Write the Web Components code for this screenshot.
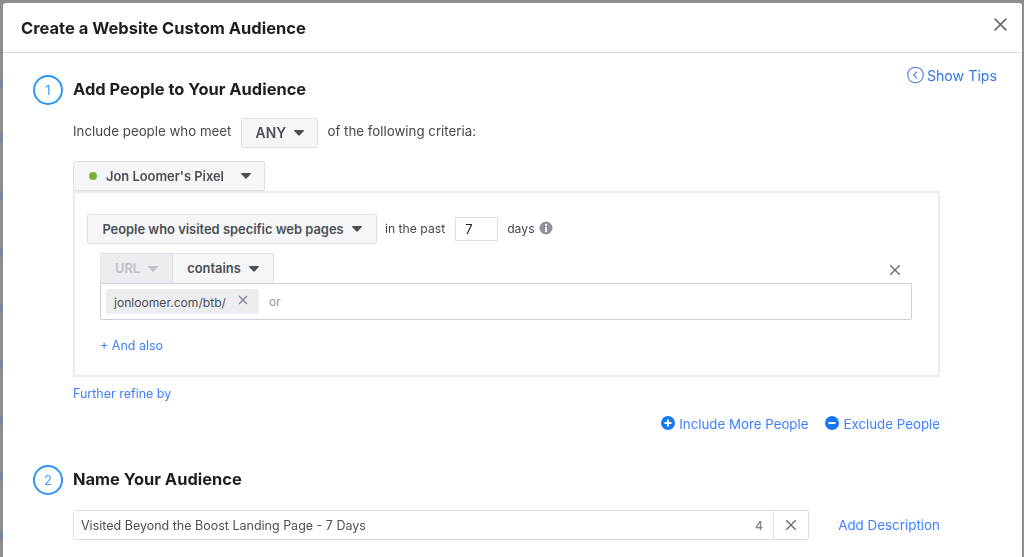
<!DOCTYPE html>
<html>
<head>
<meta charset="utf-8">
<title>Create a Website Custom Audience</title>
<style>
  html, body { margin: 0; height: 100%; overflow: hidden; background: #8e8e8e; }
  body { font-family: Inter, "Liberation Sans", sans-serif; color: #1c1e21; }
  .criteria { display: flex; align-items: center; height: 30px; margin-top: 13px; font-size: 13.3px; color: #444950; }
  .criteria span { padding-bottom: 4px; }
  .more { display: flex; justify-content: flex-end; align-items: center; gap: 17px; margin-top: 12px; width: 867px; height: 20px; }
  .more fb-link { font-size: 13.3px; }
</style>
</head>
<body>

<audience-dialog heading="Create a Website Custom Audience">
  <audience-step number="1" heading="Add People to Your Audience">
    <tips-link slot="aside">Show Tips</tips-link>

    <div class="criteria">
      <span>Include people who meet</span>
      <fb-select style="margin:0 9px 0 10px;width:77px" wide>ANY</fb-select>
      <span>of the following criteria:</span>
    </div>

    <fb-select style="margin-top:13px;width:192px" dot>Jon Loomer's Pixel</fb-select>
    <rule-panel></rule-panel>
    <fb-link style="margin-top:7px;height:18px;font-size:12.5px">Further refine by</fb-link>

    <div class="more">
      <fb-link icon="plus">Include More People</fb-link>
      <fb-link icon="minus">Exclude People</fb-link>
    </div>
  </audience-step>

  <audience-step number="2" heading="Name Your Audience" style="margin-top:31px">
    <name-field value="Visited Beyond the Boost Landing Page - 7 Days" count="4"></name-field>
  </audience-step>
</audience-dialog>

<script>
const CLOSE_ICON = (size, stroke, width) => `
  <svg width="${size}" height="${size}" viewBox="0 0 14 14" style="display:block">
    <path d="M1.5 1.5 12.5 12.5M12.5 1.5 1.5 12.5" fill="none" stroke="${stroke}" stroke-width="${width}"/>
  </svg>`;

class AudienceDialog extends HTMLElement {
    constructor() {
        super();
        this.attachShadow({ mode: "open" });
    }

    connectedCallback() {
        // bits of the page behind the overlay, only the left edge shows
        const behind = [75, 130, 188, 245, 302, 358, 414, 470, 528]
            .map(y => `<i style="top:${y}px"></i>`).join("");

        this.shadowRoot.innerHTML = `
        <style>
          :host { display: flex; height: 100vh; box-sizing: border-box; padding: 3px 2px 0 0; filter: blur(.35px); }
          .behind { position: relative; flex: 0 0 3px; }
          .behind i { position: absolute; left: 0; width: 3px; height: 9px; background: #6c80a3; opacity: .6; }
          .dialog { flex: 1; min-width: 0; background: #fff; border-radius: 3px 3px 0 0; overflow: hidden; }
          header { display: flex; align-items: center; justify-content: space-between; box-sizing: border-box;
                   height: 50px; padding: 0 14px 0 18px; border-bottom: 1px solid #dddfe2; }
          header svg { margin-top: -7px; }
          h1 { margin: 0; font-size: 16.5px; font-weight: 700; color: #1c1e21; }
          .body { padding: 22px 25px 0 30px; }
        </style>
        <div class="behind">${behind}</div>
        <section class="dialog">
          <header>
            <h1>${this.getAttribute("heading")}</h1>
            ${CLOSE_ICON(15, "#606770", 1.4)}
          </header>
          <div class="body"><slot></slot></div>
        </section>`;
    }
}

class AudienceStep extends HTMLElement {
    constructor() {
        super();
        this.attachShadow({ mode: "open" });
    }

    connectedCallback() {
        this.shadowRoot.innerHTML = `
        <style>
          :host { display: block; }
          .head { display: flex; align-items: flex-start; height: 30px; }
          .num { box-sizing: border-box; width: 30px; height: 30px; margin-right: 10px; border: 2px solid #2d96fb;
                 border-radius: 50%; display: flex; align-items: center; justify-content: center;
                 font-size: 13px; color: #3f9cfb; }
          h2 { flex: 1; margin: 0; font-size: 16.45px; line-height: 29px; font-weight: 700; color: #1c1e21; }
          .content { display: flex; flex-direction: column; align-items: flex-start; padding-left: 40px; }
        </style>
        <div class="head">
          <div class="num">${this.getAttribute("number")}</div>
          <h2>${this.getAttribute("heading")}</h2>
          <slot name="aside"></slot>
        </div>
        <div class="content"><slot></slot></div>`;
    }
}

class TipsLink extends HTMLElement {
    constructor() {
        super();
        this.attachShadow({ mode: "open" });
    }

    connectedCallback() {
        this.shadowRoot.innerHTML = `
        <style>
          :host { display: flex; align-items: center; gap: 3px; height: 18px; margin-top: -9px;
                  font-size: 14.2px; color: #3578e5; }
          svg { display: block; }
        </style>
        <svg width="17" height="18" viewBox="0 0 17 18">
          <circle cx="8.5" cy="9" r="7.8" fill="none" stroke="#4a80dc" stroke-width="1.1"/>
          <path d="M10 5.6 6.6 9 10 12.4" fill="none" stroke="#4a80dc" stroke-width="1.2"/>
        </svg>
        <slot></slot>`;
    }
}

class FbSelect extends HTMLElement {
    constructor() {
        super();
        this.attachShadow({ mode: "open" });
    }

    connectedCallback() {
        const dot = this.hasAttribute("dot") ? `<span class="dot"></span>` : "";
        this.shadowRoot.innerHTML = `
        <style>
          :host { display: flex; box-sizing: border-box; height: 30px; align-items: center; justify-content: center;
                  gap: 7px; padding: 0 8px; background: #f5f6f7; border: 1px solid #dddfe2; border-radius: 2px;
                  font-size: 12.9px; font-weight: 600; color: #4b4f56; white-space: nowrap; }
          :host([wide]) { font-size: 13.8px; letter-spacing: .2px; }
          :host([muted]) { background: #ebedf0; color: #bec3c9; }
          :host([dot]) { justify-content: flex-start; padding-left: 15px; }
          .dot { width: 8px; height: 8px; margin-right: 2px; border-radius: 50%; background: #75b33e; }
          .caret { display: block; margin-left: 1px; }
          :host([dot]) .caret { margin-left: 10px; }
        </style>
        ${dot}<slot></slot>
        <svg class="caret" width="10" height="6" viewBox="0 0 10 6">
          <path d="M.6 0h8.8c.5 0 .7.5.4.9L5.5 5.5c-.3.3-.7.3-1 0L.2.9C-.1.5.1 0 .6 0z" fill="currentColor"/>
        </svg>`;
    }
}

class RulePanel extends HTMLElement {
    constructor() {
        super();
        this.attachShadow({ mode: "open" });
    }

    connectedCallback() {
        this.shadowRoot.innerHTML = `
        <style>
          :host { display: block; box-sizing: border-box; width: 867px; height: 186px; padding: 21px 12px 0;
                  border: 2px solid #e9ebee; font-size: 12.2px; color: #444950; }
          .top { display: flex; align-items: center; height: 30px; }
          .top > span { padding-bottom: 2px; }
          .days { box-sizing: border-box; width: 43px; height: 24px; margin: 0 9px 0 10px; padding-left: 9px;
                  border: 1px solid #dddfe2; line-height: 23px; font-size: 13px; color: #1c1e21; }
          .info { display: block; margin-left: 4px; margin-top: -3px; }
          .filter { margin: 9px 0 0 13px; width: 812px; }
          .segs { display: flex; align-items: flex-end; justify-content: space-between; height: 30px; padding-right: 11px; }
          .segs > div { display: flex; }
          .segs > svg { margin-bottom: 7px; }
          .segs fb-select { border-bottom: 0; }
          .segs fb-select + fb-select { margin-left: -1px; }
          .box { box-sizing: border-box; height: 37px; display: flex; align-items: center; padding-left: 5px;
                 border: 1px solid #ccd0d5; border-radius: 0 0 2px 2px; font-size: 12.1px; }
          .chip { display: flex; align-items: center; box-sizing: border-box; width: 153px; height: 25px; padding: 2px 11px 0 8px;
                  justify-content: space-between; background: #ebedf0; border-radius: 2px; color: #4b4f56; }
          .chip svg { margin-top: -5px; }
          .or { margin-left: 10px; color: #90949c; }
          .also { margin: 16px 0 0 13px; height: 18px; font-size: 12.5px; }
        </style>
        <div class="top">
          <fb-select style="width:290px">People who visited specific web pages</fb-select>
          <span style="margin-left:8px">in the past</span>
          <div class="days">7</div>
          <span>days</span>
          <svg class="info" width="14" height="14" viewBox="0 0 14 14">
            <circle cx="7" cy="7" r="6.5" fill="#8d949e"/>
            <rect x="6" y="6" width="2" height="5" fill="#fff"/>
            <rect x="6" y="3" width="2" height="2" fill="#fff"/>
          </svg>
        </div>
        <div class="filter">
          <div class="segs">
            <div>
              <fb-select muted style="width:73px">URL</fb-select>
              <fb-select style="width:102px">contains</fb-select>
            </div>
            ${CLOSE_ICON(12, "#606770", 1.5)}
          </div>
          <div class="box">
            <span class="chip">jonloomer.com/btb/ ${CLOSE_ICON(10, "#7f8591", 1.9)}</span>
            <span class="or">or</span>
          </div>
        </div>
        <fb-link class="also">+ And also</fb-link>`;
    }
}

class FbLink extends HTMLElement {
    constructor() {
        super();
        this.attachShadow({ mode: "open" });
    }

    connectedCallback() {
        const bars = { plus: "M7 3.5v7M3.5 7h7", minus: "M3.5 7h7" }[this.getAttribute("icon")];
        const icon = bars ? `
          <svg width="14" height="14" viewBox="0 0 14 14">
            <circle cx="7" cy="7" r="7" fill="#1877f2"/>
            <path d="${bars}" stroke="#fff" stroke-width="2" fill="none"/>
          </svg>` : "";
        this.shadowRoot.innerHTML = `
        <style>
          :host { display: flex; align-items: center; gap: 4px; color: #4080ff; white-space: nowrap; }
          svg { display: block; margin-top: -3px; }
        </style>
        ${icon}<slot></slot>`;
    }
}

class NameField extends HTMLElement {
    constructor() {
        super();
        this.attachShadow({ mode: "open" });
    }

    connectedCallback() {
        this.shadowRoot.innerHTML = `
        <style>
          :host { display: flex; align-items: center; margin-top: 15px; width: 867px; }
          .field { display: flex; align-items: center; box-sizing: border-box; width: 736px; height: 30px;
                   border: 1px solid #dddfe2; border-radius: 2px; font-size: 12.5px; color: #4b4f56; }
          .value { flex: 1; padding-left: 7px; }
          .count { margin-right: 10px; font-size: 12px; font-weight: 600; color: #7f8591; }
          .clear { display: flex; align-items: center; justify-content: center; align-self: stretch; width: 34px;
                   border-left: 1px solid #dddfe2; }
          fb-link { margin-left: auto; font-size: 13.4px; }
        </style>
        <div class="field">
          <span class="value">${this.getAttribute("value")}</span>
          <span class="count">${this.getAttribute("count")}</span>
          <span class="clear">${CLOSE_ICON(12, "#606770", 1.5)}</span>
        </div>
        <fb-link>Add Description</fb-link>`;
    }
}

customElements.define("fb-link", FbLink);
customElements.define("fb-select", FbSelect);
customElements.define("tips-link", TipsLink);
customElements.define("name-field", NameField);
customElements.define("rule-panel", RulePanel);
customElements.define("audience-step", AudienceStep);
customElements.define("audience-dialog", AudienceDialog);
</script>
</body>
</html>
